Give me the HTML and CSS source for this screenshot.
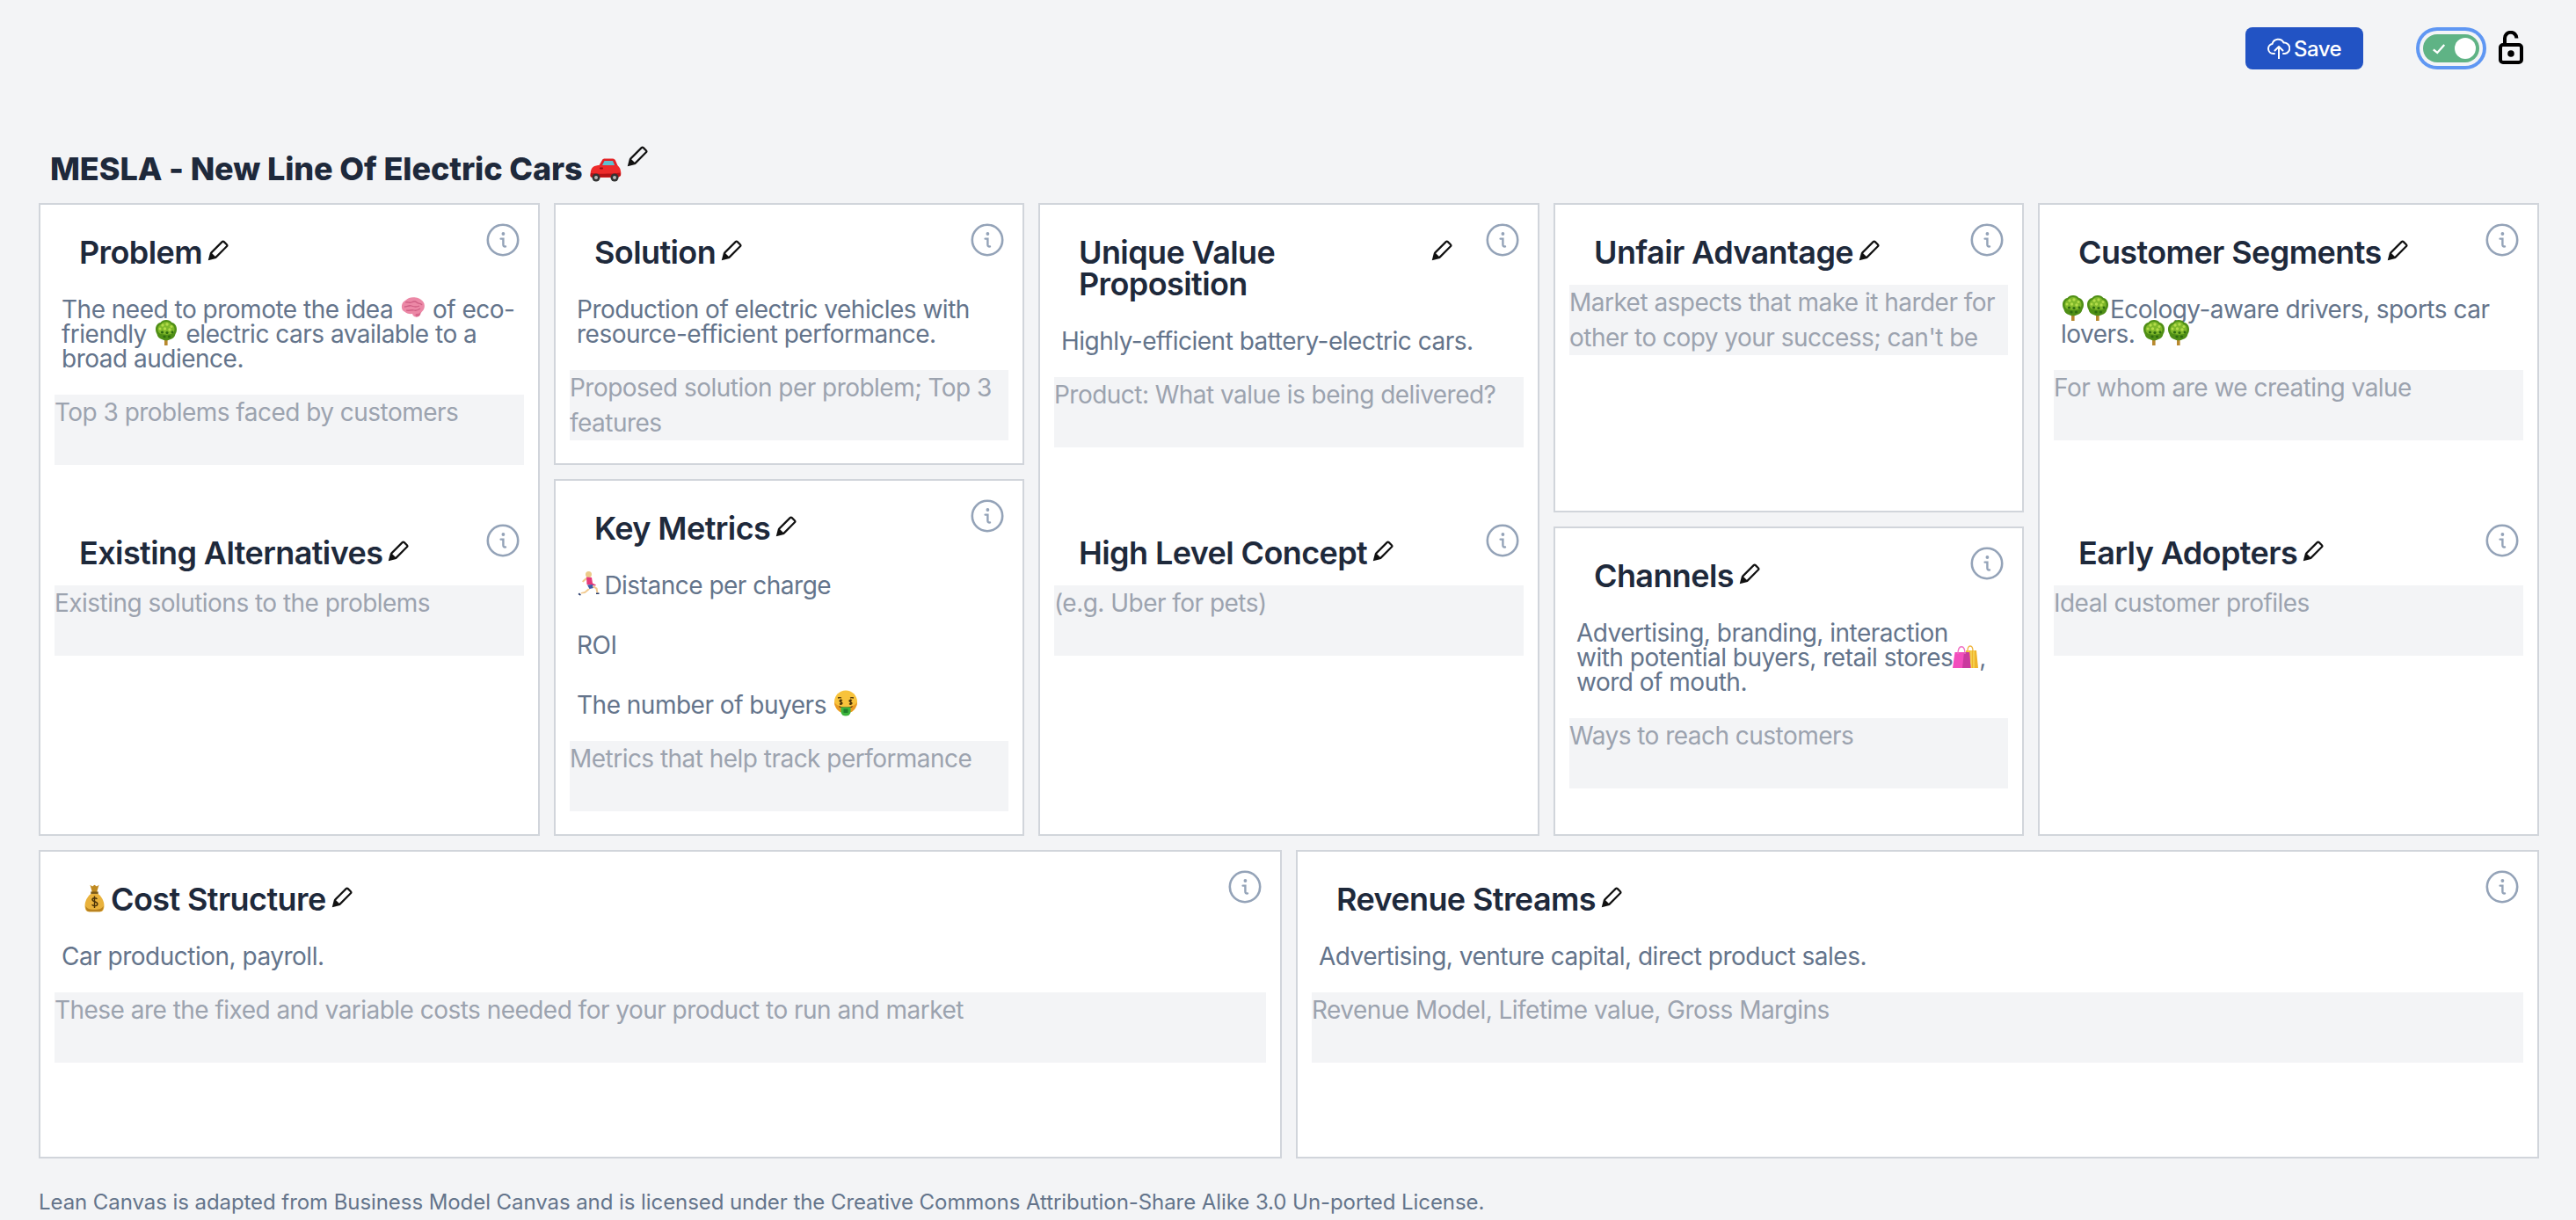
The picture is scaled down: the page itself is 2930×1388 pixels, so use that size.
FILE: index.html
```html
<!DOCTYPE html>
<html lang="en">
<head>
    <meta charset="UTF-8">
    <meta name="viewport" content="width=device-width, initial-scale=1.0">
    <title>Lean Canvas</title>
    <link rel="stylesheet" href="styles.css">
</head>
<body>
    <svg class="sprites" xmlns="http://www.w3.org/2000/svg">
        <symbol id="pencil" viewBox="-2 -2 26 26">
            <g transform="rotate(45 11 11)">
                <rect x="7.3" y="-2.2" width="7.4" height="20" rx="1.500" fill="none" stroke="currentColor" stroke-width="2.200"/>
                <path d="M6.200 17.500h9.600L11 25.500z" fill="currentColor"/>
            </g>
        </symbol>
        <symbol id="info" viewBox="0 0 38 38">
            <circle cx="19" cy="19" r="17.2" fill="none" stroke="#94a3b8" stroke-width="2.6"/>
            <circle cx="19.4" cy="12" r="1.9" fill="#94a3b8"/>
            <path d="M16.6 17.6h2.8v6.6c0 1.8 .9 2.6 2.6 2.2" fill="none" stroke="#94a3b8" stroke-width="2.4" stroke-linecap="round"/>
        </symbol>
        <symbol id="tree" viewBox="0 0 30 30">
            <rect x="13" y="22" width="3.6" height="8" fill="#b8892e"/>
            <path d="M15 1c3 0 5 1 6.500 3 3 .5 5.500 3.500 5.500 7.500 0 2-.5 4-1.500 5.500-.5 3-3 5.500-5.500 6-1.500 1-3.500 1.200-5 1.200s-3.500-.2-5-1.200c-2.500-.5-5-3-5.500-6C3.500 15.500 3 13.500 3 11.500 3 7.500 5.500 4.500 8.500 4 10 2 12 1 15 1z" fill="#4f8f16"/>
            <path d="M15 3c2.500 0 4.500 1 5.500 3 2.500 .5 4 3 4 5.500 0 2-1 4-2.500 5-3 1.500-10 1.500-14 0-1.500-1-2.500-3-2.500-5 0-2.500 1.500-5 4-5.500C10.500 4 12.500 3 15 3z" fill="#7fb82b"/>
            <g fill="#b4dc4a">
                <circle cx="11" cy="7" r="1.700"/><circle cx="16" cy="6" r="1.700"/><circle cx="21" cy="8.500" r="1.500"/>
                <circle cx="8" cy="11" r="1.500"/><circle cx="13.500" cy="11" r="1.700"/><circle cx="19" cy="12" r="1.700"/>
            </g>
            <g fill="#2f6b10">
                <circle cx="10.500" cy="15" r="1.600"/><circle cx="16" cy="15.500" r="1.600"/><circle cx="22" cy="15" r="1.400"/>
                <circle cx="13" cy="20" r="1.600"/><circle cx="18.500" cy="20" r="1.600"/>
            </g>
        </symbol>
        <symbol id="brain" viewBox="0 0 30 30">
            <path d="M2 15c-.5-4 1.500-7 4.500-8.500C9 3.500 14 2.500 18 3.500c4 .5 8 3 9.500 7 1 3.500 0 7-2.500 9-1 1.500-2.500 2.200-4 2 .5 2-.5 4-3 4-2 0-3.500-1.500-4-3.500-3.500 .5-7-.5-9-2.500C3 18.500 2.200 17 2 15z" fill="#ec88a6"/>
            <path d="M6 9c3-1 5 1 7 0s4-2 6 0 5 1 6 3M5 14c3 0 5-2 8-1s5 2 9 0M7 18c3 1 6-1 9 0s4 0 7-2" fill="none" stroke="#cf5f84" stroke-width="1.300"/>
            <path d="M18 22c2 0 4-.5 5.500-2 .5 2-1 5.500-4.500 5.500-1.500 0-2-2-1-3.500z" fill="#d9678c"/>
        </symbol>
        <symbol id="car" viewBox="0 0 38 30">
            <path d="M11 11 15 4c.5-1 1.500-1.500 3-1.500h9c1.500 0 2.500 1 3 2l3 7z" fill="#e32124"/>
            <path d="M14.500 11 17.500 5h9.500l2.500 6z" fill="#5fc0cf"/>
            <path d="M1.500 22c0-4 .5-8 3-10 2-1.500 5-2 8-2h19c2 .5 4 3 4.500 6.500 .5 2 .5 5-.5 6l-3 1.500H4C2.500 24 1.500 23.500 1.500 22z" fill="#ee2a2a"/>
            <path d="M2 19c8 1 25 1 33.500-.5l.5 3-3 2H4c-1.500 0-2.500-1-2.500-2z" fill="#b51216"/>
            <rect x="12" y="12.500" width="4" height="2" rx="1" fill="#8f0e12"/>
            <circle cx="8" cy="24" r="4.500" fill="#333"/><circle cx="8" cy="24" r="2" fill="#b9b9b9"/>
            <circle cx="29" cy="24" r="4.500" fill="#333"/><circle cx="29" cy="24" r="2" fill="#b9b9b9"/>
        </symbol>
        <symbol id="runner" viewBox="0 0 30 30">
            <circle cx="13.500" cy="4.500" r="3.500" fill="#eccb8a"/>
            <path d="M11 8c-2 1-3.500 2.500-5 4.500l1.500 1c1.500-1.200 2.500-2.500 4-3z" fill="#f2c98e"/>
            <path d="M11 7.500 17 8l1 6.500 4 2-1 1-4.500-1-5-.5z" fill="#e6397a"/>
            <path d="M12 16.500l6-.5 1 4-4.500 1z" fill="#3d5aa8"/>
            <path d="M13 20.500l-4 3.500-4 1-.5 1.500 5-.5 5.500-4.500zM18 19l3.500 2 1 4.500 2 .5-1-6-4.500-3z" fill="#f2c98e"/>
            <path d="M3 25.500l2 2.500-1.500 .5-2-1.500zM22 25.500h3.500v1.500H22z" fill="#273a6b"/>
        </symbol>
        <symbol id="money-face" viewBox="0 0 30 30">
            <circle cx="15" cy="13.500" r="13" fill="#f8c33c"/>
            <path d="M2 13.500a13 13 0 0 0 26 0c-4 8-22 8-26 0z" fill="#e99a24"/>
            <g fill="none" stroke="#4a3208" stroke-width="1.300">
                <path d="M6 9c2-.5 3-.5 4 0M20 9c1-.5 2-.5 4 0"/>
                <path d="M11 12c-1-1-3-1-3 .5s3 1 3 2.500-2 1.500-3 .5M9.500 10.500v6.500M22 12c-1-1-3-1-3 .5s3 1 3 2.500-2 1.500-3 .5M20.500 10.500v6.500"/>
            </g>
            <path d="M7 18c5 2 11 2 16 0l-1 2H8z" fill="#6b3a0f"/>
            <path d="M9.500 19.500h11V25a5.500 4.500 0 0 1-11 0z" fill="#3cb43c"/>
            <rect x="12.500" y="21.500" width="5" height="4.500" fill="#1f7f2a"/>
        </symbol>
        <symbol id="bags" viewBox="0 0 30 30">
            <path d="M15 9h12l2 20H17z" fill="#f0b52b"/>
            <path d="M18 9v20M21 9v20M24 9v20" stroke="#f7df62" stroke-width="1.200"/>
            <path d="M17 10c0-8 6-8 6 0" fill="none" stroke="#efb43c" stroke-width="1.300"/>
            <path d="M2.500 11H19l1.500 18H0z" fill="#f24dbd"/>
            <path d="M13 11h6l1.500 18H11z" fill="#c93a9e"/>
            <path d="M6 13c0-11 8-11 8 0" fill="none" stroke="#f06fc4" stroke-width="1.300"/>
        </symbol>
        <symbol id="money-bag" viewBox="0 0 28 38">
            <path d="M8 1l3 2 3-2 3 2 3-2-3 10h-6z" fill="#c08a20"/>
            <path d="M9 10h10v3H9z" fill="#7d5a14"/>
            <path d="M9 13h10c5 4 8 10 8 16 0 5-2 8-5 8H6c-3 0-5-3-5-8 0-6 3-12 8-16z" fill="#e9b23c"/>
            <path d="M2 29c0 5 2 8 5 8h14c3 0 5-3 5-8-2 4-4 5-12 5s-10-1-12-5z" fill="#b9821f"/>
            <path d="M17.500 20c-1.500-2-6.500-2-6.500 1s7 2 7 5.500-5 3.500-7.500 1M14 16v16" fill="none" stroke="#4a3208" stroke-width="1.700"/>
        </symbol>
    </svg>

    <header class="topbar">
        <button class="save-btn">
            <svg class="cloud-icon" viewBox="0 0 26 24"><path d="M8 18H6.500A5.500 5.500 0 0 1 5.500 7.100 7 7 0 0 1 18.500 5.500 6.300 6.300 0 0 1 20 18h-2"/><path d="M13 24V10M8.500 14.500 13 10l4.500 4.500"/></svg>
            Save
        </button>
        <div class="toggle">
            <svg class="toggle-check" viewBox="0 0 18 14"><path d="M2 8l5 4 9-10"/></svg>
            <span class="toggle-knob"></span>
        </div>
        <svg class="lock-icon" viewBox="0 0 28 38">
            <rect x="2" y="16" width="24" height="20" rx="3"/>
            <path d="M7 15V8.500a6.700 6.700 0 0 1 13.400 0"/>
            <circle cx="14" cy="26" r="3.800"/>
        </svg>
    </header>

    <div class="title-row">
        <h1>MESLA - New Line Of Electric Cars</h1>
        <svg class="title-car"><use href="#car"/></svg>
        <svg class="pencil title-pencil"><use href="#pencil"/></svg>
    </div>

    <main class="board">
        <section class="card">
            <div class="part part-first">
                <div class="part-head">
                    <div class="head-text"><h2>Problem</h2><svg class="pencil"><use href="#pencil"/></svg></div>
                    <svg class="info"><use href="#info"/></svg>
                </div>
                <div class="body-text">The need to promote the idea <svg class="emoji"><use href="#brain"/></svg> of eco-friendly <svg class="emoji"><use href="#tree"/></svg> electric cars available to a broad audience.</div>
                <div class="hint">Top 3 problems faced by customers</div>
            </div>
            <div class="part">
                <div class="part-head">
                    <div class="head-text"><h2>Existing Alternatives</h2><svg class="pencil"><use href="#pencil"/></svg></div>
                    <svg class="info"><use href="#info"/></svg>
                </div>
                <div class="hint">Existing solutions to the problems</div>
            </div>
        </section>

        <div class="stack">
            <section class="card card-solution">
                <div class="part">
                    <div class="part-head">
                        <div class="head-text"><h2>Solution</h2><svg class="pencil"><use href="#pencil"/></svg></div>
                        <svg class="info"><use href="#info"/></svg>
                    </div>
                    <div class="body-text">Production of electric vehicles with resource-efficient performance.</div>
                    <div class="hint">Proposed solution per problem; Top 3 features</div>
                </div>
            </section>
            <section class="card card-fill">
                <div class="part">
                    <div class="part-head">
                        <div class="head-text"><h2>Key Metrics</h2><svg class="pencil"><use href="#pencil"/></svg></div>
                        <svg class="info"><use href="#info"/></svg>
                    </div>
                    <div class="body-text body-list">
                        <p><svg class="emoji emoji-runner"><use href="#runner"/></svg> Distance per charge</p>
                        <p>ROI</p>
                        <p>The number of buyers <svg class="emoji"><use href="#money-face"/></svg></p>
                    </div>
                    <div class="hint">Metrics that help track performance</div>
                </div>
            </section>
        </div>

        <section class="card">
            <div class="part part-first">
                <div class="part-head">
                    <div class="head-text"><h2>Unique Value Proposition</h2><svg class="pencil"><use href="#pencil"/></svg></div>
                    <svg class="info"><use href="#info"/></svg>
                </div>
                <div class="body-text">Highly-efficient battery-electric cars.</div>
                <div class="hint">Product: What value is being delivered?</div>
            </div>
            <div class="part">
                <div class="part-head">
                    <div class="head-text"><h2>High Level Concept</h2><svg class="pencil"><use href="#pencil"/></svg></div>
                    <svg class="info"><use href="#info"/></svg>
                </div>
                <div class="hint">(e.g. Uber for pets)</div>
            </div>
        </section>

        <div class="stack">
            <section class="card card-unfair">
                <div class="part">
                    <div class="part-head">
                        <div class="head-text"><h2>Unfair Advantage</h2><svg class="pencil"><use href="#pencil"/></svg></div>
                        <svg class="info"><use href="#info"/></svg>
                    </div>
                    <div class="hint">Market aspects that make it harder for other to copy your success; can't be</div>
                </div>
            </section>
            <section class="card card-fill">
                <div class="part">
                    <div class="part-head">
                        <div class="head-text"><h2>Channels</h2><svg class="pencil"><use href="#pencil"/></svg></div>
                        <svg class="info"><use href="#info"/></svg>
                    </div>
                    <div class="body-text">Advertising, branding, interaction with potential buyers, retail stores<svg class="emoji"><use href="#bags"/></svg>, word of mouth.</div>
                    <div class="hint">Ways to reach customers</div>
                </div>
            </section>
        </div>

        <section class="card">
            <div class="part part-first">
                <div class="part-head">
                    <div class="head-text"><h2>Customer Segments</h2><svg class="pencil"><use href="#pencil"/></svg></div>
                    <svg class="info"><use href="#info"/></svg>
                </div>
                <div class="body-text"><svg class="emoji emoji-pair"><use href="#tree"/></svg><svg class="emoji emoji-pair"><use href="#tree"/></svg>Ecology-aware drivers, sports car lovers. <svg class="emoji emoji-pair"><use href="#tree"/></svg><svg class="emoji emoji-pair"><use href="#tree"/></svg></div>
                <div class="hint">For whom are we creating value</div>
            </div>
            <div class="part">
                <div class="part-head">
                    <div class="head-text"><h2>Early Adopters</h2><svg class="pencil"><use href="#pencil"/></svg></div>
                    <svg class="info"><use href="#info"/></svg>
                </div>
                <div class="hint">Ideal customer profiles</div>
            </div>
        </section>
    </main>

    <div class="board-bottom">
        <section class="card">
            <div class="part">
                <div class="part-head">
                    <div class="head-text"><svg class="head-emoji"><use href="#money-bag"/></svg><h2>Cost Structure</h2><svg class="pencil"><use href="#pencil"/></svg></div>
                    <svg class="info"><use href="#info"/></svg>
                </div>
                <div class="body-text">Car production, payroll.</div>
                <div class="hint">These are the fixed and variable costs needed for your product to run and market</div>
            </div>
        </section>
        <section class="card">
            <div class="part">
                <div class="part-head">
                    <div class="head-text"><h2>Revenue Streams</h2><svg class="pencil"><use href="#pencil"/></svg></div>
                    <svg class="info"><use href="#info"/></svg>
                </div>
                <div class="body-text">Advertising, venture capital, direct product sales.</div>
                <div class="hint">Revenue Model, Lifetime value, Gross Margins</div>
            </div>
        </section>
    </div>

    <footer class="license">Lean Canvas is adapted from Business Model Canvas and is licensed under the Creative Commons Attribution-Share Alike 3.0 Un-ported License.</footer>
</body>
</html>
```

FILE: styles.css
```css
* {
    box-sizing: border-box;
}

html, body {
    height: 100%;
}

body {
    margin: 0;
    padding: 0 0 0 44px;
    width: 2930px;
    overflow: hidden;
    font-family: Inter, "Noto Sans", sans-serif;
    background-color: #f3f4f6;
    color: #64748b;
}

.sprites {
    display: none;
}

/* top bar */
.topbar {
    display: flex;
    justify-content: flex-end;
    align-items: flex-start;
    padding: 31px 60px 0 0;
    height: 79px;
}

.save-btn {
    display: flex;
    align-items: center;
    justify-content: center;
    gap: 4px;
    width: 134px;
    height: 48px;
    padding: 0;
    border: 0;
    border-radius: 8px;
    background-color: #2253c4;
    color: #ffffff;
    font-family: inherit;
    font-size: 24px;
    font-weight: 500;
    letter-spacing: -0.5px;
}

.cloud-icon {
    width: 26px;
    height: 24px;
    fill: none;
    stroke: #ffffff;
    stroke-width: 2;
    stroke-linecap: round;
    stroke-linejoin: round;
}

.toggle {
    display: flex;
    align-items: center;
    justify-content: space-between;
    width: 64px;
    height: 32px;
    margin: 8px 22px 0 68px;
    padding: 0 4px 0 10px;
    border-radius: 16px;
    background-color: #5fb385;
    box-shadow: 0 0 0 4px #f3f4f6, 0 0 0 8px #5f97f3;
}

.toggle-check {
    width: 16px;
    height: 13px;
    fill: none;
    stroke: #ffffff;
    stroke-width: 2.6;
}

.toggle-knob {
    width: 24px;
    height: 24px;
    border-radius: 50%;
    background-color: #ffffff;
}

.lock-icon {
    width: 28px;
    height: 38px;
    margin-top: 4px;
    fill: none;
    stroke: #000000;
    stroke-width: 4;
}

.lock-icon circle {
    fill: #000000;
    stroke: none;
}

/* title */
.title-row {
    display: flex;
    align-items: flex-start;
    height: 36px;
    margin: 95px 0 21px;
    padding-left: 13px;
}

h1 {
    margin: 0;
    font-size: 36px;
    line-height: 36px;
    font-weight: 800;
    letter-spacing: -0.1px;
    color: #1e293b;
}

.title-car {
    width: 38px;
    height: 30px;
    margin: 4px 0 0 7px;
    flex: none;
}

.pencil {
    flex: none;
    width: 26px;
    height: 26px;
    margin: 4px 0 0 4px;
    color: #111111;
}

.title-pencil {
    margin: -8px 0 0 3px;
}

/* grid of cards */
.board {
    display: grid;
    grid-template-columns: 570px 535px 570px 535px 570px;
    gap: 16px;
    width: 2844px;
    height: 720px;
}

.board-bottom {
    display: grid;
    grid-template-columns: 1414px 1414px;
    gap: 16px;
    width: 2844px;
    height: 351px;
    margin-top: 16px;
}

.stack {
    display: flex;
    flex-direction: column;
    gap: 16px;
}

.card {
    border: 2px solid #d1d5db;
    background-color: #ffffff;
    min-width: 0;
}

.card-solution {
    height: 298px;
}

.card-unfair {
    height: 352px;
}

.card-fill {
    flex: 1;
}

.part {
    padding: 0 16px;
}

.part-first {
    height: 342px;
}

.part-head {
    display: flex;
    justify-content: space-between;
    align-items: flex-start;
    padding: 21px 5px 0 28px;
    margin-bottom: 19px;
}

.head-text {
    display: flex;
    align-items: flex-start;
    margin-top: 15px;
    padding-right: 38px;
    min-width: 0;
}

h2 {
    margin: 0;
    font-size: 36px;
    line-height: 36px;
    font-weight: 600;
    letter-spacing: -0.6px;
    color: #1e293b;
}

.head-emoji {
    flex: none;
    width: 25px;
    height: 32px;
    margin: 1px 6px 0 5px;
}

.info {
    flex: none;
    width: 38px;
    height: 38px;
}

.body-text {
    margin: 33px 8px 27px;
    font-size: 28px;
    line-height: 28px;
    letter-spacing: -0.5px;
}

.body-list p {
    margin: 0 0 40px;
}

.body-list p:last-child {
    margin-bottom: 0;
}

/* emoji are drawn, margins keep them from growing the line box */
.emoji {
    width: 30px;
    height: 30px;
    margin: -5px 0 -3px;
}

.emoji-runner {
    margin-right: -6px;
}

.emoji-pair {
    margin-left: -1px;
    margin-right: -1px;
}

.hint {
    height: 80px;
    overflow: hidden;
    background-color: #f3f4f6;
    color: #9ca3af;
    font-size: 28px;
    line-height: 40px;
    letter-spacing: -0.53px;
}

.license {
    margin-top: 34px;
    font-size: 24px;
    line-height: 32px;
    letter-spacing: -0.07px;
}
```
